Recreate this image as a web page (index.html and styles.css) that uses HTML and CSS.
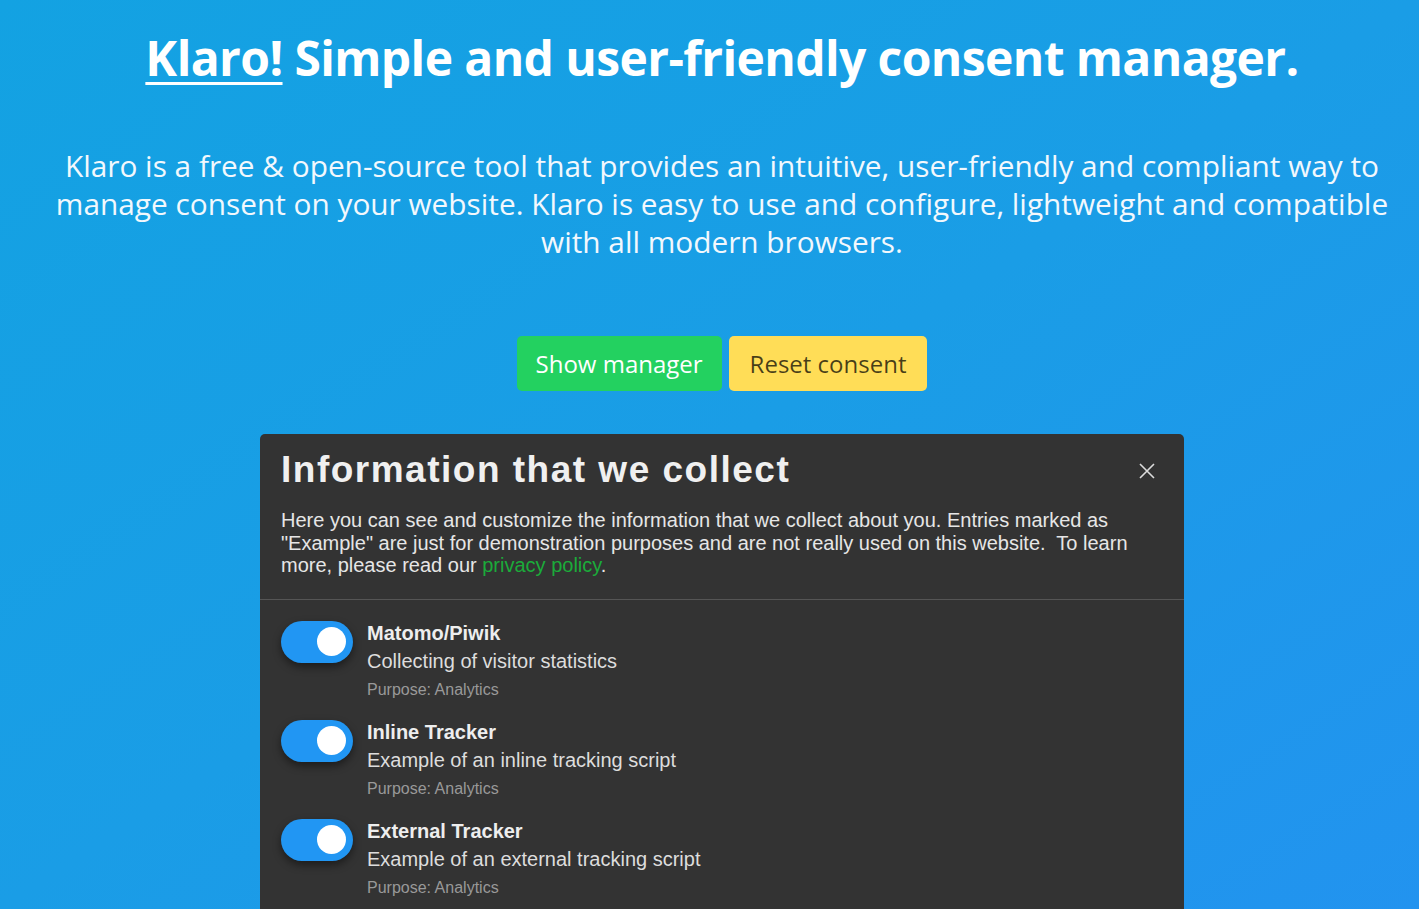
FILE: index.html
```html
<!DOCTYPE html>
<html lang="en">
<head>
<meta charset="utf-8">
<title>Klaro! Simple and user-friendly consent manager.</title>
<link rel="stylesheet" href="styles.css">
</head>
<body>
<main class="page">
  <section class="hero">
    <h1 class="hero-title"><a class="hero-brand" href="#">Klaro!</a> Simple and user-friendly consent manager.</h1>
    <p class="hero-lead">Klaro is a free &amp; open-source tool that provides an intuitive, user-friendly and compliant way to<br>manage consent on your website. Klaro is easy to use and configure, lightweight and compatible<br>with all modern browsers.</p>
    <div class="hero-actions">
      <button class="btn btn-success">Show manager</button>
      <button class="btn btn-warning">Reset consent</button>
    </div>
  </section>

  <section class="modal">
    <header class="modal-header">
      <h2 class="modal-title">Information that we collect</h2>
      <button class="modal-close" aria-label="Close">
        <svg width="16" height="16" viewBox="0 0 16 16"><path d="M1 1L15 15M15 1L1 15" stroke="#dcdcdc" stroke-width="1.6" fill="none"/></svg>
      </button>
      <p class="modal-desc">Here you can see and customize the information that we collect about you. Entries marked as<br>"Example" are just for demonstration purposes and are not really used on this website.&nbsp; To learn<br>more, please read our <a class="modal-link" href="#">privacy policy</a>.</p>
    </header>
    <ul class="apps">
      <li class="app">
        <span class="switch"><span class="knob"></span></span>
        <div class="app-info">
          <div class="app-name">Matomo/Piwik</div>
          <div class="app-desc">Collecting of visitor statistics</div>
          <div class="app-purpose">Purpose: Analytics</div>
        </div>
      </li>
      <li class="app">
        <span class="switch"><span class="knob"></span></span>
        <div class="app-info">
          <div class="app-name">Inline Tracker</div>
          <div class="app-desc">Example of an inline tracking script</div>
          <div class="app-purpose">Purpose: Analytics</div>
        </div>
      </li>
      <li class="app">
        <span class="switch"><span class="knob"></span></span>
        <div class="app-info">
          <div class="app-name">External Tracker</div>
          <div class="app-desc">Example of an external tracking script</div>
          <div class="app-purpose">Purpose: Analytics</div>
        </div>
      </li>
    </ul>
  </section>
</main>
</body>
</html>
```
FILE: styles.css
```css
html, body {
  margin: 0;
  padding: 0;
  height: 100%;
}
body {
  background: linear-gradient(to bottom right, #13a2e2 0%, #1a9de6 50%, #2293ef 100%);
  overflow: hidden;
  font-family: "Liberation Sans", Arial, sans-serif;
}
.page {
  padding-left: 25px;
  display: flex;
  flex-direction: column;
  align-items: center;
}
.hero {
  display: flex;
  flex-direction: column;
  align-items: center;
  width: 100%;
}
.hero-title {
  margin: 24px 0 0;
  font-family: "Open Sans", sans-serif;
  font-weight: 700;
  font-size: 48px;
  line-height: 68px;
  color: #fff;
  text-align: center;
  white-space: nowrap;
  letter-spacing: -0.6px;
}
.hero-brand {
  color: #fff;
  text-decoration: underline;
  text-decoration-thickness: 3px;
  text-underline-offset: 6px;
}
.hero-lead {
  margin: 55px 0 0;
  font-family: "Open Sans", sans-serif;
  font-size: 29.8px;
  line-height: 38px;
  color: #f2f8fd;
  text-align: center;
  white-space: nowrap;
}
.hero-actions {
  display: flex;
  gap: 7px;
  margin-top: 75px;
}
.btn {
  height: 55px;
  border: none;
  border-radius: 5px;
  font-family: "Open Sans", sans-serif;
  font-size: 24px;
  padding: 0 20px;
  cursor: pointer;
}
.btn-success {
  background: #23d160;
  color: #fff;
  padding: 0 19px;
}
.btn-warning {
  background: #ffdd57;
  color: rgba(0, 0, 0, 0.72);
  padding: 0 21px;
}
.modal {
  margin-top: 43px;
  width: 924px;
  background: #333;
  border-radius: 5px 5px 0 0;
  color: #eee;
  height: 520px;
}
.modal-header {
  position: relative;
  padding: 14px 21px 22px;
  border-bottom: 1px solid #555;
}
.modal-title {
  margin: 0;
  font-size: 37px;
  line-height: 44px;
  font-weight: 700;
  letter-spacing: 1.5px;
  color: #f0f0f0;
}
.modal-close {
  position: absolute;
  top: 29px;
  right: 29px;
  background: none;
  border: none;
  padding: 0;
  width: 16px;
  height: 16px;
  line-height: 0;
}
.modal-desc {
  margin: 17px 0 0;
  font-size: 20px;
  line-height: 22.5px;
  color: #e6e6e6;
}
.modal-link {
  color: #1bab3a;
  text-decoration: none;
}
.apps {
  list-style: none;
  margin: 0;
  padding: 21px 21px 0;
  display: flex;
  flex-direction: column;
  gap: 15px;
}
.app {
  display: flex;
  gap: 14px;
  align-items: flex-start;
  height: 84px;
}
.switch {
  flex: none;
  width: 72px;
  height: 42px;
  border-radius: 21px;
  background: #2196f3;
  box-shadow: 0 4px 8px rgba(0, 0, 0, 0.45);
  display: flex;
  align-items: center;
  justify-content: flex-end;
  padding-right: 7px;
  box-sizing: border-box;
}
.knob {
  width: 29px;
  height: 29px;
  border-radius: 50%;
  background: #fff;
}
.app-info {
  display: flex;
  flex-direction: column;
}
.app-name {
  font-size: 20px;
  font-weight: 700;
  line-height: 24px;
  color: #eee;
}
.app-desc {
  font-size: 20px;
  line-height: 32px;
  color: #ddd;
}
.app-purpose {
  font-size: 16px;
  line-height: 26px;
  color: #999;
}
```
